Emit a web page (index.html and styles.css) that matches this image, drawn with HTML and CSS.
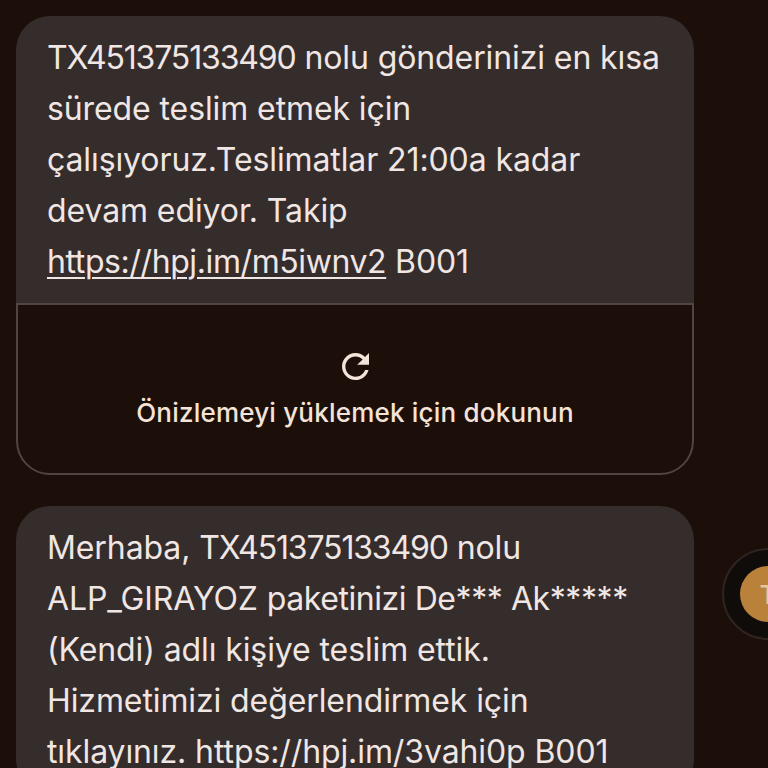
FILE: index.html
```html
<!DOCTYPE html>
<html lang="tr">
<head>
<meta charset="utf-8">
<title>Mesajlar</title>
<link rel="stylesheet" href="styles.css">
</head>
<body>
<main class="thread">
  <article class="bubble">
    <div class="message">
      <p class="line"><span class="code">TX451375133490</span> nolu gönderinizi en kısa</p>
      <p class="line">sürede teslim etmek için</p>
      <p class="line">çalışıyoruz.Teslimatlar 21:00a kadar</p>
      <p class="line">devam ediyor. Takip</p>
      <p class="line"><a class="link" href="#">https://hpj.im/m5iwnv2</a> B001</p>
    </div>
    <div class="preview">
      <svg class="reload" viewBox="4 4 16 16" aria-hidden="true">
        <path d="M17.65 6.35C16.2 4.9 14.21 4 12 4c-4.42 0-7.99 3.58-7.99 8s3.57 8 7.99 8c3.73 0 6.84-2.55 7.73-6h-2.08c-.82 2.33-3.04 4-5.65 4-3.31 0-6-2.69-6-6s2.69-6 6-6c1.66 0 3.14.69 4.22 1.78L13 11h7V4l-2.35 2.35z" />
      </svg>
      <span class="preview-label">Önizlemeyi yüklemek için dokunun</span>
    </div>
  </article>
  <article class="bubble">
    <div class="message">
      <p class="line">Merhaba, <span class="code">TX451375133490</span> nolu</p>
      <p class="line">ALP_GIRAYOZ <span class="tight">paketinizi De*** Ak*****</span></p>
      <p class="line">(Kendi) adlı kişiye teslim ettik.</p>
      <p class="line">Hizmetimizi değerlendirmek için</p>
      <p class="line">tıklayınız. https://hpj.im/3vahi0p B001</p>
    </div>
  </article>
</main>
<div class="bubble-head">
  <div class="avatar"><span class="avatar-letter">T</span></div>
</div>
</body>
</html>
```
FILE: styles.css
```css
html, body {
  margin: 0;
  height: 768px;
  overflow: hidden;
  background: #1c0f09;
}
body {
  position: relative;
  font-family: "Inter", "Noto Sans", sans-serif;
}
.thread {
  display: flex;
  flex-direction: column;
  gap: 31px;
  width: 678px;
  padding: 16px 0 0 16px;
}
.bubble {
  background: #352c2c;
  border-radius: 34px;
  overflow: hidden;
  flex-shrink: 0;
}
.message {
  padding: 16px 0 16px 31px;
  color: #f0e6e3;
  font-size: 32px;
  line-height: 51px;
  letter-spacing: -0.1px;
}
.line {
  margin: 0;
  white-space: nowrap;
}
.code {
  letter-spacing: -1.15px;
}
.tight {
  letter-spacing: -0.43px;
}
.link {
  color: inherit;
  letter-spacing: -0.4px;
  text-decoration: underline;
  text-underline-offset: 4px;
  text-decoration-thickness: 2px;
}
.preview {
  display: flex;
  flex-direction: column;
  align-items: center;
  gap: 17px;
  height: 172px;
  box-sizing: border-box;
  padding-top: 48px;
  background: #1c0f09;
  border: 2px solid #524540;
  border-radius: 0 0 34px 34px;
}
.reload {
  width: 27px;
  height: 27px;
  fill: #f4e3d8;
}
.preview-label {
  color: #f4e3d8;
  font-size: 26px;
  line-height: 32px;
  font-weight: 500;
  letter-spacing: 0.2px;
}
.bubble-head {
  position: absolute;
  left: 722px;
  top: 548px;
  width: 92px;
  height: 92px;
  box-sizing: border-box;
  border: 2px solid #2f2420;
  border-radius: 50%;
  background: #0f0c0a;
  display: flex;
  align-items: center;
  justify-content: center;
}
.avatar {
  width: 56px;
  height: 56px;
  border-radius: 50%;
  background: #b9813a;
  display: flex;
  align-items: center;
  justify-content: center;
}
.avatar-letter {
  color: #e6c79c;
  font-size: 26px;
  font-weight: 500;
}
```
